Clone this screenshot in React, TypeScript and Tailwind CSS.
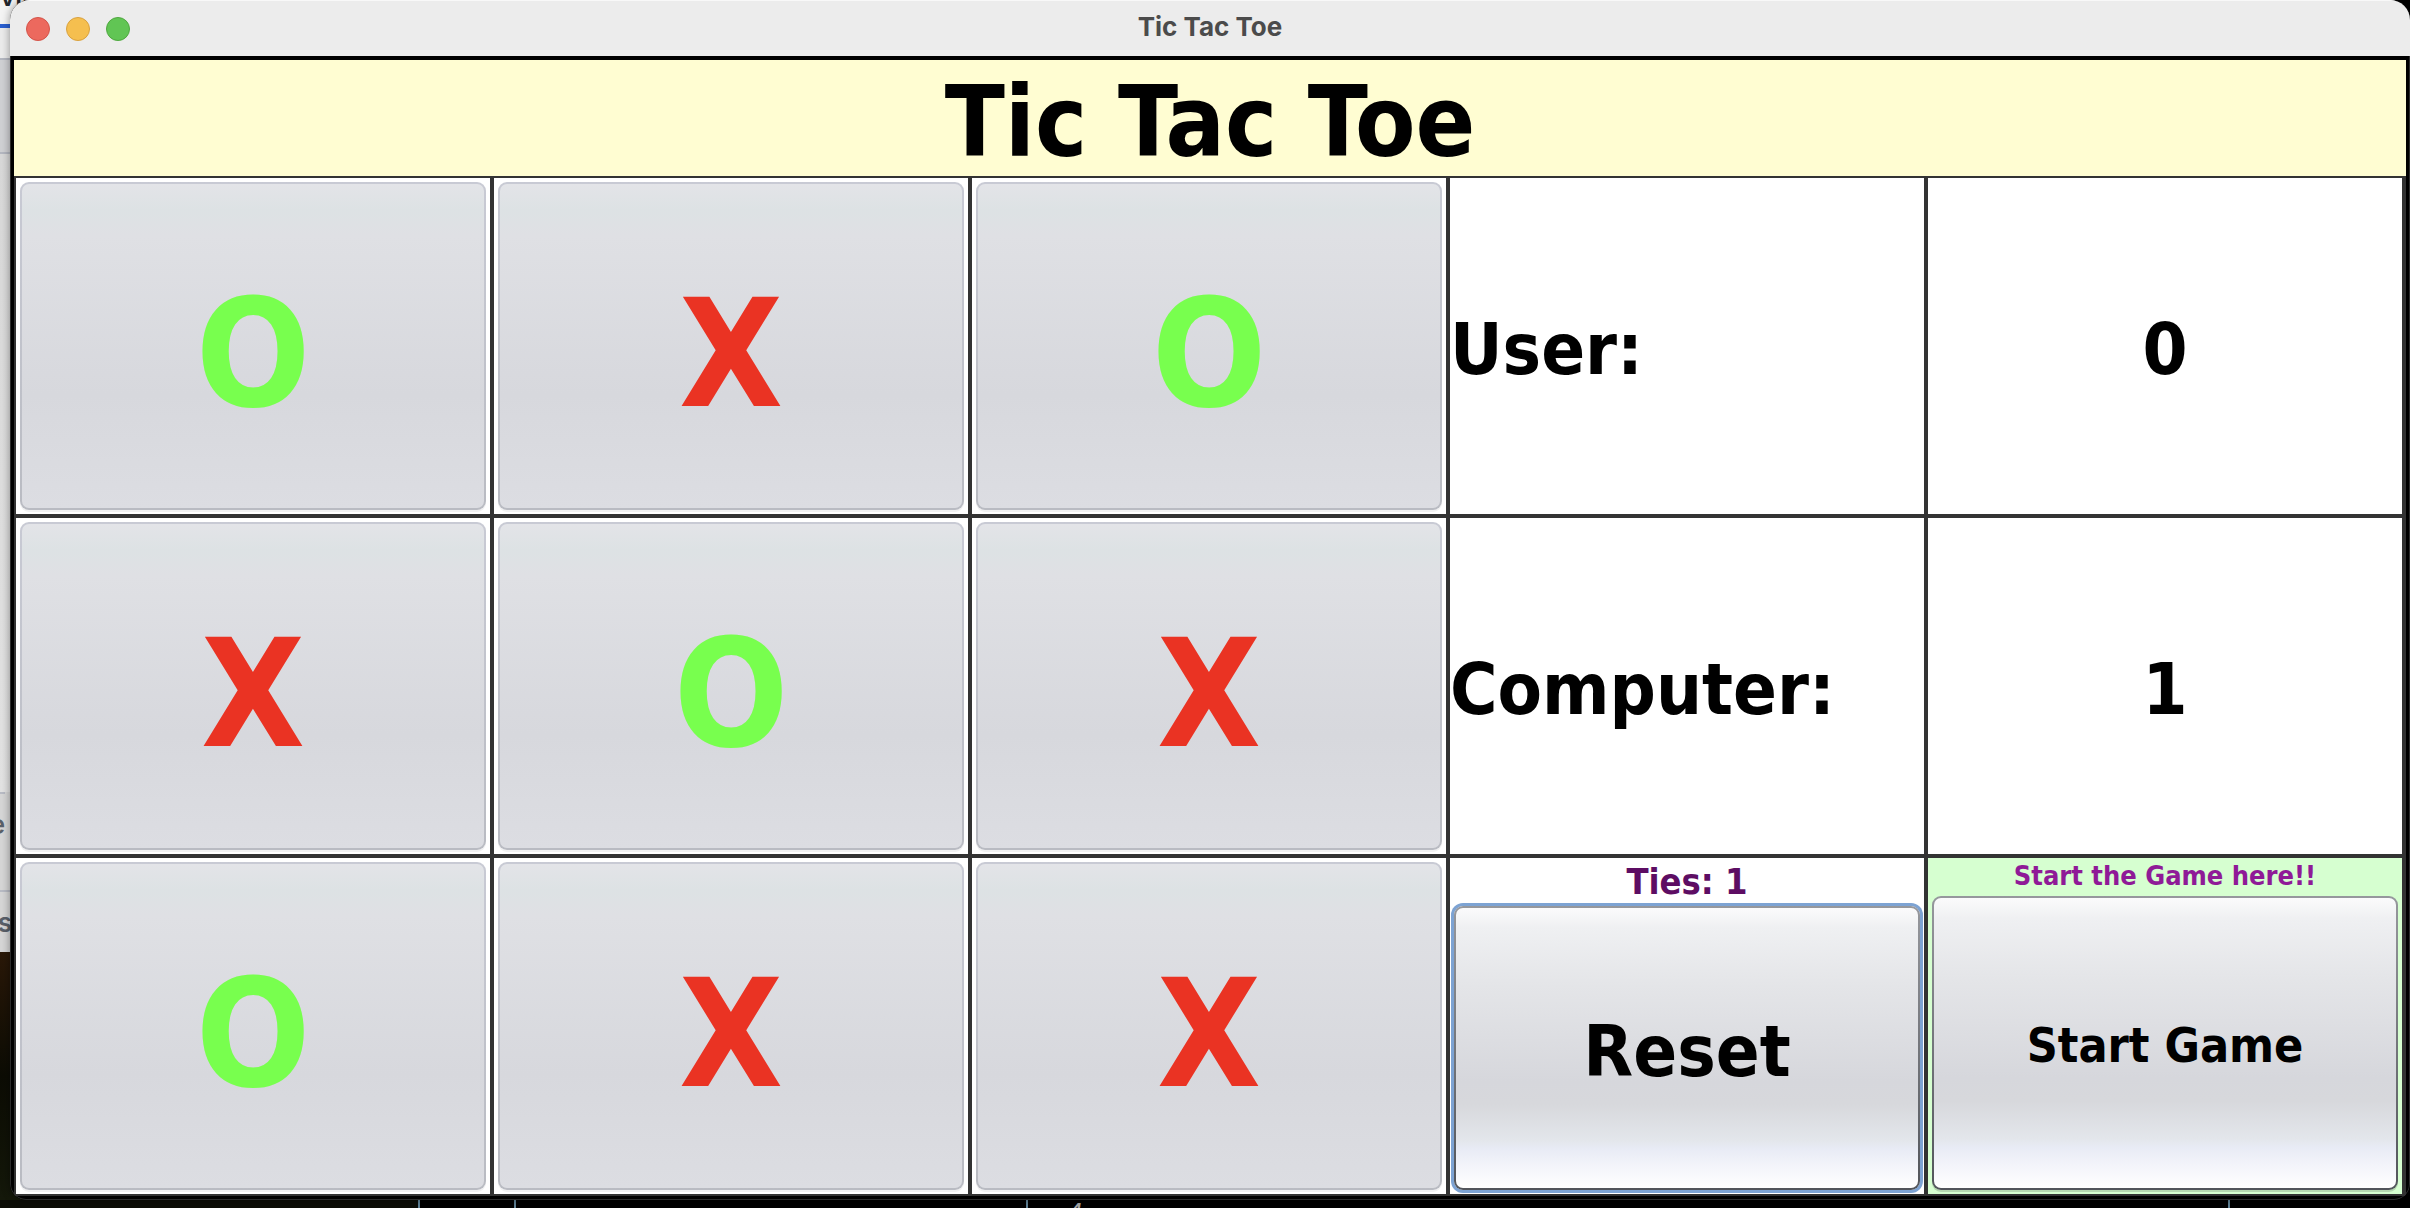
import type { ReactNode } from "react";

type Mark = "X" | "O";

const board: Mark[][] = [
  ["O", "X", "O"],
  ["X", "O", "X"],
  ["O", "X", "X"],
];

function Square({ mark, label }: { mark: Mark; label: string }) {
  return (
    <div className="flex bg-white p-1">
      <button
        type="button"
        aria-label={label}
        className={`flex-1 rounded-[9px] border-2 border-transparent pt-4 text-[150px] leading-none shadow-[0_2px_0_#f1f1f2] [background:linear-gradient(#e3e4e8,#dde2e4_8%,#dfe0e4_16%,#d7d8dd_65%,#dcdde2)_padding-box,linear-gradient(#c8cad4,#b9bbc2)_border-box] ${
          mark === "O" ? "text-[#78ff4e]" : "text-[#ea3323]"
        }`}
      >
        {mark}
      </button>
    </div>
  );
}

function ScoreName({ children }: { children: ReactNode }) {
  return <div className="flex items-center bg-white pt-1.5 text-[72px] leading-none">{children}</div>;
}

function ScoreValue({ children }: { children: ReactNode }) {
  return <div className="flex items-center justify-center bg-white pt-1.5 text-[72px] leading-none">{children}</div>;
}

function Desktop() {
  return (
    <div aria-hidden="true" className="absolute inset-0 flex flex-col overflow-hidden bg-black font-['Inter',sans-serif] text-[26px] leading-none font-semibold text-[#5a6069]">
      <div className="h-[952px] w-10 shrink-0 bg-[#d6d6d6]">
        <div className="h-6 overflow-hidden bg-[#f4f4f4]">
          <div className="-mt-4 text-[#22252c]">vil</div>
        </div>
        <div className="h-1 bg-[#2a5fd0]" />
        <div className="h-[30px] bg-[#ebebeb]" />
        <div className="h-24 border-y-2 border-[#b4b7c0] bg-[#cfd0d3]" />
        <div className="h-[638px] bg-linear-to-b from-[#d8d8d8] to-[#e2e2e2]" />
        <div className="flex h-[98px] w-[5px] justify-end border-t-2 border-[#b8bbc4] pt-[18px]">e</div>
        <div className="flex h-[62px] w-3 justify-end border-t-2 border-[#b8bbc4] pt-[18px]">s</div>
      </div>
      <div className="w-[419px] flex-1 bg-linear-to-b from-[#2a1808] via-[#0c0c04] to-[#14180a]" />
      <div className="flex h-2 justify-between overflow-hidden">
        <div className="flex w-[1100px]">
          <div className="w-[418px] bg-[#0c0d06]" />
          <div className="w-24 border-l-2 border-[#5f8296]" />
          <div className="w-[512px] border-l-2 border-[#5f8296]" />
          <div className="w-10 border-l-2 border-[#5f8296]" />
          <div className="font-normal text-[#a8a8a8] italic">4</div>
        </div>
        <div className="w-[182px] border-l-2 border-[#5f8296]" />
      </div>
    </div>
  );
}

export default function App() {
  return (
    <div className="relative flex min-h-screen flex-col pb-2 pl-2.5 font-['DejaVu_Sans_Condensed','DejaVu_Sans',sans-serif] font-bold text-black">
      <Desktop />
      <main className="relative flex flex-1 flex-col overflow-hidden rounded-t-[20px] rounded-b-[16px] bg-black shadow-[0_0_8px_rgba(0,0,0,0.4)]">
        <header className="grid h-14 grid-cols-3 items-center border-t border-[#f8f8f8] bg-[#ececec] px-4">
          <div className="flex gap-4">
            <button type="button" aria-label="Close" className="size-6 rounded-full border border-[#d35449] bg-[#ec695e]" />
            <button type="button" aria-label="Minimize" className="size-6 rounded-full border border-[#d8a13f] bg-[#f5bf4f]" />
            <button type="button" aria-label="Zoom" className="size-6 rounded-full border border-[#4fa73f] bg-[#61c554]" />
          </div>
          <div className="pb-1 text-center font-['Inter',sans-serif] text-[26px] leading-none text-[#4b4b4b]">Tic Tac Toe</div>
        </header>

        <section className="flex flex-1 flex-col rounded-b-[16px] border-x border-b border-[#2c2c2c] bg-black px-[3px] pt-1 pb-[3px]">
          <h1 className="flex h-[116px] items-center justify-center bg-[#fffdd2] pt-2 text-[98px] leading-none">Tic Tac Toe</h1>

          <div className="grid flex-1 grid-cols-5 grid-rows-3 gap-1 bg-[#333] py-0.5 pr-1 pl-0.5">
            {board[0].map((mark, i) => (
              <Square key={i} mark={mark} label={`Row 1 column ${i + 1}: ${mark}`} />
            ))}
            <ScoreName>User:</ScoreName>
            <ScoreValue>0</ScoreValue>

            {board[1].map((mark, i) => (
              <Square key={i} mark={mark} label={`Row 2 column ${i + 1}: ${mark}`} />
            ))}
            <ScoreName>Computer:</ScoreName>
            <ScoreValue>1</ScoreValue>

            {board[2].map((mark, i) => (
              <Square key={i} mark={mark} label={`Row 3 column ${i + 1}: ${mark}`} />
            ))}
            <div className="flex flex-col bg-white p-1">
              <div className="h-11 text-center text-[36px] leading-10 text-[#5d0d63]">Ties: 1</div>
              <button
                type="button"
                className="flex-1 rounded-[9px] border-2 border-transparent pt-1.5 text-[72px] leading-none shadow-[0_0_0_3px_#7da3d3] [background:linear-gradient(#fbfbfc,#eff0f2_7%,#e4e5e8_28%,#d6d7dc_62%,#d7d8dc_70%,#e3e6eb_83%,#e8ebf5_86%,#f3f4fa_92%,#ffffff)_padding-box,linear-gradient(#96989d,#52555b)_border-box]"
              >
                Reset
              </button>
            </div>
            <div className="flex flex-col bg-[#d6ffd0] p-1">
              <div className="h-[34px] text-center text-[27px] leading-7 text-[#8f1a97]">Start the Game here!!</div>
              <button
                type="button"
                className="flex-1 rounded-[9px] border-2 border-transparent pt-1 text-[48px] leading-none shadow-[0_2px_0_#b5d8b1] [background:linear-gradient(#fbfbfc,#eff0f2_7%,#e4e5e8_28%,#d6d7dc_62%,#d7d8dc_70%,#e3e6eb_83%,#e8ebf5_86%,#f3f4fa_92%,#ffffff)_padding-box,linear-gradient(#96989d,#52555b)_border-box]"
              >
                Start Game
              </button>
            </div>
          </div>
        </section>
      </main>
    </div>
  );
}
